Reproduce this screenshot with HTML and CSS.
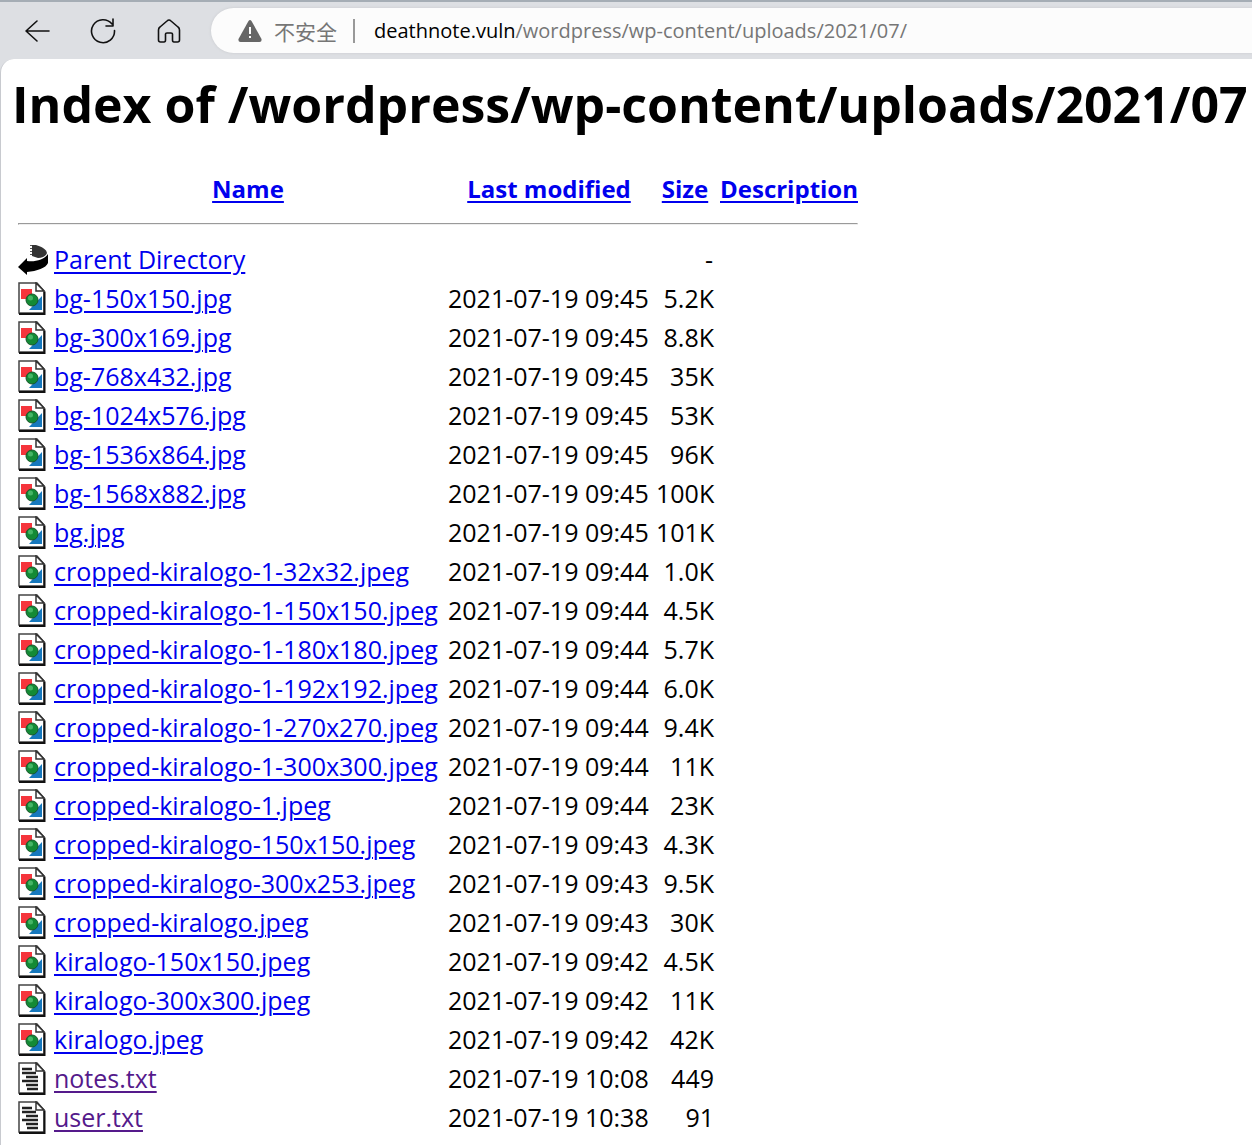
FILE: index.html
```html
<!DOCTYPE html>
<html lang="en">
<head>
<meta charset="utf-8">
<title>Index of /wordpress/wp-content/uploads/2021/07</title>
<link rel="stylesheet" href="styles.css">
</head>
<body>
<svg class="sprite" aria-hidden="true">
  <symbol id="image" viewBox="0 0 28 34">
    <path d="M1 1H19L26 9V31H1Z" fill="#fff" stroke="#444" stroke-width="1.500"/>
    <path d="M1 32H26.500V10" fill="none" stroke="#111" stroke-width="2"/>
    <path d="M18 1V9H26Z" fill="#fff" stroke="#333" stroke-width="1.500"/>
    <path d="M3 7H14V17H3Z" fill="#f5353c"/>
    <path d="M24 14V28H11Z" fill="#1678bd"/>
    <circle cx="14" cy="18" r="6" fill="#138a35" stroke="#17552a"/>
    <circle cx="12.500" cy="16" r="2.500" fill="#45b565"/>
  </symbol>
  <symbol id="text" viewBox="0 0 28 34">
    <path d="M1 1H19L26 9V31H1Z" fill="#fff" stroke="#444" stroke-width="1.500"/>
    <path d="M1 32H26.500V10" fill="none" stroke="#111" stroke-width="2"/>
    <path d="M18 1V9H26Z" fill="#fff" stroke="#333" stroke-width="1.500"/>
    <path d="M4 7H14M4 11H18M8 15H20M4 19H20M8 23H20M9 27H20" stroke="#222" stroke-width="2.500"/>
  </symbol>
  <symbol id="back" viewBox="0 0 30 34">
    <path d="M14 2H18C24 4 28 6 29 10C28 13 24 15 20 15L14 13Z" fill="#333"/>
    <path d="M12 2.500h2M12 5.500h2M12 8.500h2M12 11.500h2" stroke="#555"/>
    <path d="M30 11V20C28 25 19 28 9 29V32L0 24L9 15V18C17 19 26 17 30 11Z" fill="#000"/>
  </symbol>
</svg>
<header class="toolbar">
  <nav class="controls">
    <button class="control" aria-label="Back"><svg viewBox="0 0 26 26"><path d="M25 13H2M13 3L2 13L13 23"/></svg></button>
    <button class="control" aria-label="Refresh"><svg viewBox="0 0 26 26"><path d="M22 6A11.500 11.500 0 1 0 24.500 12.500M23 1V8H16"/></svg></button>
    <button class="control" aria-label="Home"><svg viewBox="0 0 26 26"><path d="M13 2Q14 2 15 3L22 9Q23.500 10 23.500 12V22Q23.500 24 21.500 24H18Q16.500 24 16.500 22V16Q16.500 15 15 15H11Q9.500 15 9.500 16V22Q9.500 24 8 24H4.500Q2.500 24 2.500 22V12Q2.500 10 4 9L11 3Q12 2 13 2Z"/></svg></button>
  </nav>
  <div class="address">
    <svg class="warning" viewBox="0 0 24 24" aria-hidden="true"><path d="M10.500 2Q12 0 13.500 2L23.500 20Q24 23 21.500 23H2.500Q0 23 .5 20Z" fill="#666"/><path d="M12 8V15M12 17V19" stroke="#fff" stroke-width="2"/></svg>
    <span class="security" lang="zh">不安全</span>
    <span class="divider"></span>
    <span class="url"><span class="host">deathnote.vuln</span>/wordpress/wp-content/uploads/2021/07/</span>
  </div>
</header>
<main class="page">
<h1 class="title">Index of /wordpress/wp-content/uploads/2021/07</h1>
<table class="listing">
<colgroup><col class="col-icon"><col class="col-name"><col class="col-date"><col class="col-size"><col class="col-description"></colgroup>
<thead>
<tr><th></th><th><a href="#">Name</a></th><th><a href="#">Last modified</a></th><th><a href="#">Size</a></th><th><a href="#">Description</a></th></tr>
<tr class="rule"><td colspan="5"><hr></td></tr>
</thead>
<tbody>
<tr><td><svg class="icon back"><use href="#back"/></svg></td><td><a href="#">Parent Directory</a></td><td></td><td class="size"><span class="dash">-</span></td><td></td></tr>
<tr><td><svg class="icon"><use href="#image"/></svg></td><td><a href="#">bg-150x150.jpg</a></td><td>2021-07-19 09:45</td><td class="size">5.2K</td><td></td></tr>
<tr><td><svg class="icon"><use href="#image"/></svg></td><td><a href="#">bg-300x169.jpg</a></td><td>2021-07-19 09:45</td><td class="size">8.8K</td><td></td></tr>
<tr><td><svg class="icon"><use href="#image"/></svg></td><td><a href="#">bg-768x432.jpg</a></td><td>2021-07-19 09:45</td><td class="size">35K</td><td></td></tr>
<tr><td><svg class="icon"><use href="#image"/></svg></td><td><a href="#">bg-1024x576.jpg</a></td><td>2021-07-19 09:45</td><td class="size">53K</td><td></td></tr>
<tr><td><svg class="icon"><use href="#image"/></svg></td><td><a href="#">bg-1536x864.jpg</a></td><td>2021-07-19 09:45</td><td class="size">96K</td><td></td></tr>
<tr><td><svg class="icon"><use href="#image"/></svg></td><td><a href="#">bg-1568x882.jpg</a></td><td>2021-07-19 09:45</td><td class="size">100K</td><td></td></tr>
<tr><td><svg class="icon"><use href="#image"/></svg></td><td><a href="#">bg.jpg</a></td><td>2021-07-19 09:45</td><td class="size">101K</td><td></td></tr>
<tr><td><svg class="icon"><use href="#image"/></svg></td><td><a href="#">cropped-kiralogo-1-32x32.jpeg</a></td><td>2021-07-19 09:44</td><td class="size">1.0K</td><td></td></tr>
<tr><td><svg class="icon"><use href="#image"/></svg></td><td><a href="#">cropped-kiralogo-1-150x150.jpeg</a></td><td>2021-07-19 09:44</td><td class="size">4.5K</td><td></td></tr>
<tr><td><svg class="icon"><use href="#image"/></svg></td><td><a href="#">cropped-kiralogo-1-180x180.jpeg</a></td><td>2021-07-19 09:44</td><td class="size">5.7K</td><td></td></tr>
<tr><td><svg class="icon"><use href="#image"/></svg></td><td><a href="#">cropped-kiralogo-1-192x192.jpeg</a></td><td>2021-07-19 09:44</td><td class="size">6.0K</td><td></td></tr>
<tr><td><svg class="icon"><use href="#image"/></svg></td><td><a href="#">cropped-kiralogo-1-270x270.jpeg</a></td><td>2021-07-19 09:44</td><td class="size">9.4K</td><td></td></tr>
<tr><td><svg class="icon"><use href="#image"/></svg></td><td><a href="#">cropped-kiralogo-1-300x300.jpeg</a></td><td>2021-07-19 09:44</td><td class="size">11K</td><td></td></tr>
<tr><td><svg class="icon"><use href="#image"/></svg></td><td><a href="#">cropped-kiralogo-1.jpeg</a></td><td>2021-07-19 09:44</td><td class="size">23K</td><td></td></tr>
<tr><td><svg class="icon"><use href="#image"/></svg></td><td><a href="#">cropped-kiralogo-150x150.jpeg</a></td><td>2021-07-19 09:43</td><td class="size">4.3K</td><td></td></tr>
<tr><td><svg class="icon"><use href="#image"/></svg></td><td><a href="#">cropped-kiralogo-300x253.jpeg</a></td><td>2021-07-19 09:43</td><td class="size">9.5K</td><td></td></tr>
<tr><td><svg class="icon"><use href="#image"/></svg></td><td><a href="#">cropped-kiralogo.jpeg</a></td><td>2021-07-19 09:43</td><td class="size">30K</td><td></td></tr>
<tr><td><svg class="icon"><use href="#image"/></svg></td><td><a href="#">kiralogo-150x150.jpeg</a></td><td>2021-07-19 09:42</td><td class="size">4.5K</td><td></td></tr>
<tr><td><svg class="icon"><use href="#image"/></svg></td><td><a href="#">kiralogo-300x300.jpeg</a></td><td>2021-07-19 09:42</td><td class="size">11K</td><td></td></tr>
<tr><td><svg class="icon"><use href="#image"/></svg></td><td><a href="#">kiralogo.jpeg</a></td><td>2021-07-19 09:42</td><td class="size">42K</td><td></td></tr>
<tr><td><svg class="icon"><use href="#text"/></svg></td><td><a class="visited" href="#">notes.txt</a></td><td>2021-07-19 10:08</td><td class="size">449</td><td></td></tr>
<tr><td><svg class="icon"><use href="#text"/></svg></td><td><a class="visited" href="#">user.txt</a></td><td>2021-07-19 10:38</td><td class="size">91</td><td></td></tr>
</tbody>
</table>
</main>
</body>
</html>
```
FILE: styles.css
```css
* { box-sizing: border-box; }
body {
  margin: 0;
  background: #dddfe3;
  color: #000;
  font: 25px/39px "Open Sans", "Noto Sans", "Noto Sans CJK SC", sans-serif;
}
.sprite { display: none; }
.toolbar {
  display: flex;
  align-items: center;
  height: 59px;
  padding: 0 0 0 24px;
  border-top: 2px solid #a5adb5;
}
.controls { display: flex; gap: 40px; margin-right: 29px; }
.control {
  width: 26px;
  height: 26px;
  padding: 0;
  border: 0;
  background: none;
}
.control svg {
  display: block;
  width: 26px;
  height: 26px;
  fill: none;
  stroke: #111;
  stroke-width: 1.6;
  stroke-linecap: round;
  stroke-linejoin: round;
}
.address {
  display: flex;
  flex: 1;
  align-items: center;
  height: 45px;
  padding-left: 27px;
  border-radius: 23px 0 0 23px;
  background: #fcfcfc;
  box-shadow: 0 0 3px #c8cace;
  white-space: nowrap;
  font-size: 20px;
  line-height: 28px;
  color: #767676;
}
.warning { width: 24px; height: 24px; margin-right: 12px; }
.security {
  font-family: "Noto Sans CJK SC", sans-serif;
  font-size: 21px;
}
.divider { width: 2px; height: 24px; margin: 0 19px 0 16px; background: #999; }
.host { color: #000; }
.page {
  padding: 15px 11px 8px;
  border-left: 1px solid #c8cacf;
  border-radius: 14px 0 0 0;
  background: #fff;
}
.title {
  margin: 0 0 34px;
  font-size: 50px;
  line-height: 61px;
  white-space: nowrap;
}
.listing { table-layout: fixed; width: 846px; margin-left: 3px; border-spacing: 0; }
.col-icon { width: 36px; }
.col-name { width: 394px; }
.col-date { width: 208px; }
.col-size { width: 64px; }
.col-description { width: 144px; }
th, td { height: 39px; padding: 0 3px; white-space: nowrap; }
th { text-align: center; font-size: 24px; }
.rule td { height: 32px; line-height: 32px; }
hr { margin: 0; }
.size { text-align: right; }
.dash { padding-right: 1px; }
.icon { display: block; width: 28px; height: 34px; }
.back { width: 30px; }
a { color: #0000ee; text-decoration: underline; text-decoration-thickness: 2px; text-underline-offset: 3px; text-decoration-skip-ink: auto; }
.visited { color: #551a8b; }
```
